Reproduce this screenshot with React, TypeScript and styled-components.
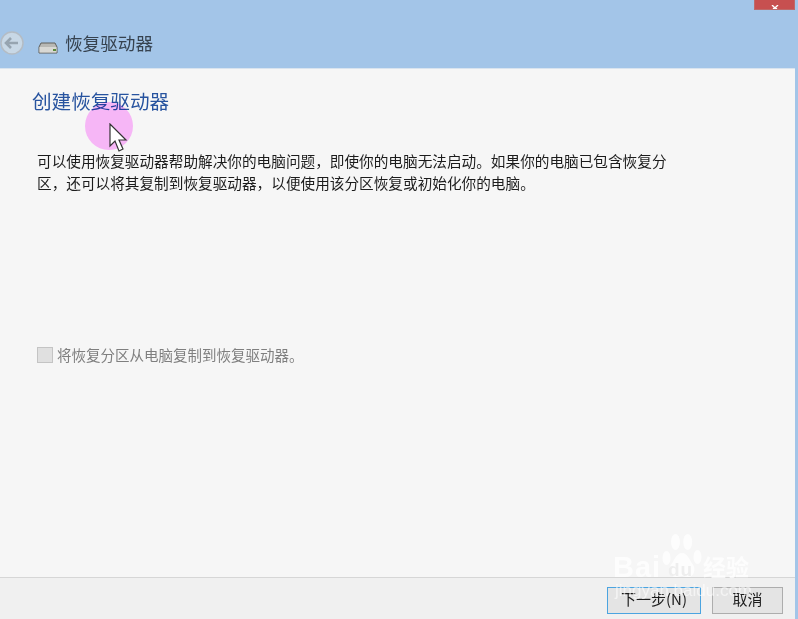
import React from "react";
import styled, { createGlobalStyle } from "styled-components";

const Global = createGlobalStyle`
  html, body { margin: 0; padding: 0; }
  body { width: 798px; height: 619px; overflow: hidden; background: #a3c5e8; font-family: "Noto Sans CJK SC", "Liberation Sans", sans-serif; }
`;

const Frame = styled.div`
  position: relative;
  width: 798px;
  height: 619px;
  display: flex;
  flex-direction: column;
  overflow: hidden;
  background: #a3c5e8;
  padding-right: 3px;
  box-sizing: border-box;
  filter: blur(0.4px);
`;

const TitleBar = styled.header`
  height: 68px;
  flex: none;
  display: flex;
  align-items: center;
  padding-top: 18px;
  box-sizing: border-box;
`;

const BackButton = styled.div`
  width: 24px;
  height: 24px;
  margin-right: 14px;
  flex: none;
  display: flex;
`;

const DriveIcon = styled.div`
  width: 20px;
  height: 12px;
  margin: 9px 7px 0 0;
  flex: none;
  display: flex;
`;

const AppName = styled.span`
  font-size: 17.6px;
  line-height: 24px;
  color: #36424f;
`;

const Main = styled.main`
  flex: 1;
  background: #f6f6f6;
  border-top: 1px solid #d9e4ef;
  padding: 18px 0 0 32px;
  display: flex;
  flex-direction: column;
  min-height: 0;
`;

const Heading = styled.h1`
  margin: 0;
  font-size: 19.6px;
  line-height: 28px;
  font-weight: 400;
  color: #27539f;
`;

const Description = styled.p`
  margin: 35px 0 0 5px;
  width: 640px;
  font-size: 14.65px;
  line-height: 22px;
  color: #1c1c1c;
`;

const OptionRow = styled.label`
  margin: 151px 0 0 5px;
  display: flex;
  align-items: center;
  gap: 4px;
  font-size: 14.5px;
  line-height: 20px;
  color: #7f7f7f;
`;

const CheckBox = styled.span`
  width: 14px;
  height: 14px;
  background: #e0e0e0;
  border: 1px solid #c4c4c4;
  flex: none;
`;

const Footer = styled.footer`
  height: 42px;
  box-sizing: border-box;
  flex: none;
  background: #f0f0f0;
  border-top: 1px solid #d6d6d6;
  display: flex;
  justify-content: flex-end;
  align-items: flex-start;
  gap: 11px;
  padding: 9px 12px 0 0;
`;

const Button = styled.button<{ $primary?: boolean }>`
  width: ${(p) => (p.$primary ? "94px" : "71px")};
  height: 27px;
  padding: 0 0 3px;
  font-family: inherit;
  font-size: 15px;
  line-height: 20px;
  color: #1c1c1c;
  background: #e4e4e4;
  border: ${(p) => (p.$primary ? "1.5px solid #4ba4e0" : "1.5px solid #adadad")};
`;

const CloseButton = styled.div`
  position: absolute;
  top: 0;
  right: 3px;
  width: 41px;
  height: 10px;
  background: #c75050;
  border: 1px solid #bd6a6a;
  border-top: none;
  box-sizing: border-box;
  overflow: hidden;
  display: flex;
  justify-content: center;
  align-items: flex-end;
`;

const Highlight = styled.div`
  position: absolute;
  left: 85px;
  top: 102px;
  width: 48px;
  height: 48px;
  border-radius: 50%;
  background: #ffbdff;
  mix-blend-mode: multiply;
`;

const Cursor = styled.svg`
  position: absolute;
  left: 108px;
  top: 123px;
`;

const Watermark = styled.div`
  position: absolute;
  left: 612px;
  top: 532px;
  width: 160px;
  height: 80px;
  color: rgba(255, 255, 255, 0.75);
  pointer-events: none;
`;

const Paw = styled.svg`
  position: absolute;
  left: 48px;
  top: 1px;
`;

const BrandLatin = styled.span`
  position: absolute;
  left: 1px;
  top: 17px;
  font-family: "Liberation Sans", sans-serif;
  font-size: 29px;
  line-height: 36px;
  font-weight: 700;
  letter-spacing: 1px;
`;

const BrandDu = styled.span`
  position: absolute;
  left: 56px;
  top: 28px;
  font-family: "Liberation Sans", sans-serif;
  font-size: 19px;
  line-height: 20px;
  font-weight: 700;
  letter-spacing: 1px;
  color: #eeeeee;
`;

const BrandCjk = styled.span`
  position: absolute;
  left: 91px;
  top: 21px;
  font-size: 23px;
  line-height: 26px;
  font-weight: 700;
`;

const BrandUrl = styled.span`
  position: absolute;
  left: 3px;
  top: 48px;
  font-family: "Liberation Sans", sans-serif;
  font-size: 17px;
  line-height: 22px;
  white-space: nowrap;
  opacity: 0.8;
`;

export default function App() {
  return (
    <>
      <Global />
      <Frame>
        <TitleBar>
          <BackButton>
            <svg width="24" height="24" viewBox="0 0 24 24">
              <circle cx="12" cy="12" r="11" fill="#c8d8e6" stroke="#b4bcc4" strokeWidth="1.5" />
              <path d="M6 12h12M11 7l-5 5 5 5" fill="none" stroke="#96a4b0" strokeWidth="2.6" />
            </svg>
          </BackButton>
          <DriveIcon>
            <svg width="20" height="12" viewBox="0 0 20 12">
              <path d="M3 1h14l2 4v6H1V5z" fill="#b8b8b4" stroke="#60605c" strokeWidth="1" />
              <rect x="1.5" y="5" width="17" height="5.5" fill="#d8d8d4" />
              <rect x="15" y="7" width="3" height="2" fill="#5c8a3c" />
            </svg>
          </DriveIcon>
          <AppName>恢复驱动器</AppName>
        </TitleBar>
        <Main>
          <Heading>创建恢复驱动器</Heading>
          <Description>
            可以使用恢复驱动器帮助解决你的电脑问题，即使你的电脑无法启动。如果你的电脑已包含恢复分区，还可以将其复制到恢复驱动器，以便使用该分区恢复或初始化你的电脑。
          </Description>
          <OptionRow>
            <CheckBox />
            将恢复分区从电脑复制到恢复驱动器。
          </OptionRow>
        </Main>
        <Footer>
          <Button $primary>下一步(N)</Button>
          <Button>取消</Button>
        </Footer>
        <CloseButton>
          <svg width="10" height="4" viewBox="0 0 10 4">
            <path d="M2 0l3 3 3-3M3 4l2-1 2 1" fill="none" stroke="#fff" strokeWidth="1.4" />
          </svg>
        </CloseButton>
        <Highlight />
        <Cursor width="24" height="30" viewBox="0 0 24 30">
          <path d="M2 1v22l5-5 4 10 4-2-4-9h7z" fill="#fff" stroke="#333" strokeWidth="1.2" />
        </Cursor>
        <Watermark>
          <Paw width="44" height="48" viewBox="0 0 54 48" preserveAspectRatio="none" fill="currentColor">
            <ellipse cx="8" cy="25" rx="5" ry="7" />
            <ellipse cx="19" cy="9" rx="5.5" ry="8" />
            <ellipse cx="34" cy="9" rx="5.5" ry="8" />
            <ellipse cx="46" cy="24" rx="5" ry="7" />
            <path d="M27 20c7 0 9 7 13 11 5 5 1 14-6 13-3 0-5-1-7-1s-4 1-7 1c-8 1-11-8-6-13 4-4 6-11 13-11z" />
          </Paw>
          <BrandLatin>Bai</BrandLatin>
          <BrandDu>du</BrandDu>
          <BrandCjk>经验</BrandCjk>
          <BrandUrl>jingyan.baidu.com</BrandUrl>
        </Watermark>
      </Frame>
    </>
  );
}
